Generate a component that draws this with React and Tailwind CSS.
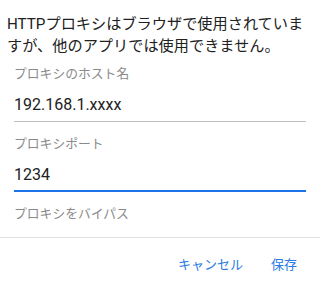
import React from 'react';

const font = { fontFamily: '"Roboto", "Noto Sans CJK JP", sans-serif' };

function Field({ label, value, focused }) {
  return (
    <div className="px-[14px]">
      <div className="text-[12.8px] leading-[16px] text-[#8a8a8a]">{label}</div>
      {value !== undefined && (
        <div
          className={
            'mt-[11px] text-[16px] leading-[24px] text-[#212121] ' +
            (focused ? 'pb-[3px] border-b-2 border-[#1a73e8]' : 'pb-[4px] border-b border-[#bdbdbd]')
          }
        >
          {value}
        </div>
      )}
    </div>
  );
}

export default function App() {
  return (
    <div className="w-[320px] h-[285px] bg-white flex flex-col overflow-hidden" style={font}>
      <div className="h-[238px] border-b border-[#e0e0e0] overflow-hidden flex flex-col">
        <p className="pt-[13px] px-[7px] text-[15.2px] leading-[22px] text-[#212121]">
          HTTPプロキシはブラウザで使用されていますが、他のアプリでは使用できません。
        </p>
        <div className="mt-[9px] flex flex-col gap-[14px]">
          <Field label="プロキシのホスト名" value="192.168.1.xxxx" />
          <Field label="プロキシポート" value="1234" focused />
          <Field label="プロキシをバイパス" />
        </div>
      </div>
      <div className="flex justify-end gap-[28px] pr-[23px] pt-[17px] text-[13px] leading-[20px] text-[#2a7ae2]">
        <button type="button">キャンセル</button>
        <button type="button">保存</button>
      </div>
    </div>
  );
}
